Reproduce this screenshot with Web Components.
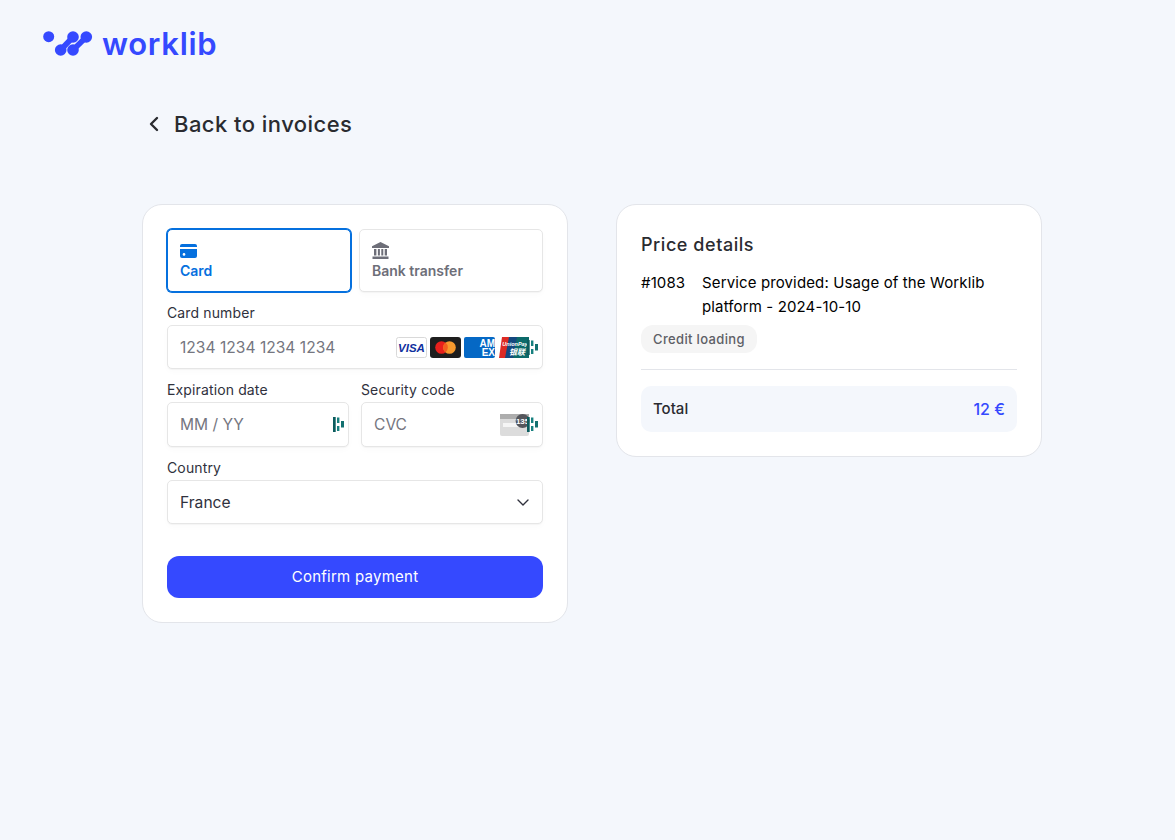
<!DOCTYPE html>
<html lang="en"><head><meta charset="utf-8"><title>Payment</title>
<style>
html,body{margin:0;padding:0}
body{background:#f4f7fc;font-family:Inter,"Noto Sans",sans-serif;color:#2a2b30;min-height:840px}
</style></head><body>
<wl-page>
  <wl-logo slot="logo">worklib</wl-logo>
  <wl-back slot="back">Back to invoices</wl-back>
  <wl-payment slot="left"></wl-payment>
  <wl-price slot="right"></wl-price>
</wl-page>
<script>
function def(name, html){
  customElements.define(name, class extends HTMLElement{
    constructor(){super();const r=this.attachShadow({mode:'open'});r.innerHTML=html;}
  });
}
def('wl-page',`<style>
:host{display:block}
.head{padding:29px 0 0 43px;height:55px}
.back{padding:25px 0 0 142px}
.cols{display:flex;gap:48px;align-items:flex-start;padding:65px 0 0 142px}
</style>
<div class="head"><slot name="logo"></slot></div>
<div class="back"><slot name="back"></slot></div>
<div class="cols"><slot name="left"></slot><slot name="right"></slot></div>`);

def('wl-logo',`<style>
:host{display:flex;align-items:center;gap:9px;height:30px;color:#3549ff}
svg{display:block}
.t{font:600 31px/30px "Inter",sans-serif;letter-spacing:.7px}
</style>
<svg width="50" height="30" viewBox="0 0 50 30" fill="#3549ff" stroke="#3549ff">
<circle cx="5.7" cy="7.7" r="5.5" stroke="none"/>
<circle cx="17.7" cy="21" r="5.8" stroke="none"/><circle cx="30" cy="8" r="5.8" stroke="none"/>
<path d="M17.7 21 30 8" stroke-width="5.6"/>
<circle cx="30" cy="21" r="5.8" stroke="none"/><circle cx="43.3" cy="8" r="5.8" stroke="none"/>
<path d="M30 21 43.3 8" stroke-width="5.6"/>
</svg><span class="t"><slot></slot></span>`);

def('wl-back',`<style>
:host{display:flex;align-items:center;gap:15px;height:30px;font:500 22px/30px Inter,sans-serif;letter-spacing:.45px;color:#2a2b30}
svg{display:block;margin-left:6px}
</style>
<svg width="11" height="16" viewBox="0 0 11 16" fill="none" stroke="#2a2b30" stroke-width="2.4" stroke-linecap="round" stroke-linejoin="round"><path d="M9 2 3 8l6 6"/></svg><span><slot></slot></span>`);

def('wl-card',`<style>
:host{display:block;box-sizing:border-box;width:426px;background:#fff;border:1px solid #e3e5ea;border-radius:20px;padding:24px}
</style><slot></slot>`);

def('wl-tab',`<style>
:host{display:flex;flex-direction:column;box-sizing:border-box;height:63px;padding:12px 12px 0;background:#fff;border:1px solid #e6e6e6;border-radius:5px;box-shadow:0 1px 1px rgba(0,0,0,.03),0 3px 6px rgba(0,0,0,.02);font:600 14px/18px Inter,sans-serif;color:#6d6e78}
:host([active]){border-color:#0570de;color:#0570de;box-shadow:0 0 0 1px #0570de,0 1px 1px rgba(0,0,0,.03),0 3px 6px rgba(18,42,66,.02)}
.i{height:17px;margin-bottom:3px;display:flex;align-items:center}
</style><div class="i"><slot name="icon"></slot></div><div><slot></slot></div>`);

def('wl-field',`<style>
:host{display:block;font:400 14px/17px Inter,sans-serif;letter-spacing:.13px;color:#30313d}
label{display:block;margin-bottom:4px}
.box{position:relative;box-sizing:border-box;height:44px;padding:0 12px;display:flex;align-items:center;justify-content:space-between;background:#fff;border:1px solid #e6e6e6;border-radius:5px;box-shadow:0 1px 1px rgba(0,0,0,.03),0 3px 6px rgba(0,0,0,.02);font-size:15.6px;letter-spacing:0;color:#757680}
:host([value]) .box{color:#30313d}
:host([tall]) .box{height:45px}
</style><label><slot name="label"></slot></label><div class="box"><span><slot></slot></span><slot name="end"></slot></div>`);

def('wl-hb',`<style>
:host{position:absolute;right:4px;top:50%;margin-top:-7.5px;width:11px;height:16px;display:block}
svg{display:block}
</style><svg width="11" height="16" viewBox="0 0 11 16"><path fill="#0b5c5e" d="M0 0h2.7v15H0z"/><path fill="#17807f" d="M4 .5h2.4v5.5H4zM4 9h2.4v5H4z"/><path fill="#12706f" d="M8 4h3v6.5H8z"/></svg>`);

def('wl-brands',`<style>
:host{display:flex;gap:3px;align-items:center;margin-right:1px}
svg{display:block}
</style>
<svg width="31" height="21" viewBox="0 0 31 21"><rect x=".5" y=".5" width="30" height="20" rx="2" fill="#fff" stroke="#d9d9d9"/><text x="15.5" y="15" text-anchor="middle" font-family="Liberation Sans,sans-serif" font-size="11.5" font-weight="700" font-style="italic" fill="#10309e">VISA</text></svg>
<svg width="31" height="21" viewBox="0 0 31 21"><rect width="31" height="21" rx="3" fill="#1e1e1e"/><circle cx="11.5" cy="10.5" r="6.3" fill="#e8201c"/><circle cx="19.5" cy="10.5" r="6.3" fill="#f79a2e"/><path d="M15.5 5.6a6.3 6.3 0 0 1 0 9.8a6.3 6.3 0 0 1 0-9.8z" fill="#f2601f"/></svg>
<svg width="31" height="21" viewBox="0 0 31 21"><rect width="31" height="21" rx="2" fill="#0568c5"/><text x="31" y="10" text-anchor="end" font-family="Liberation Sans,sans-serif" font-size="10" font-weight="700" fill="#fff">AM</text><text x="31" y="19" text-anchor="end" font-family="Liberation Sans,sans-serif" font-size="10" font-weight="700" fill="#fff">EX</text></svg>
<svg width="30" height="21" viewBox="0 0 30 21" style="margin-left:1px"><path d="M3 0h9L8 21H0z" fill="#dd2a24"/><path d="M10 0h10l-4 21H6z" fill="#14487f"/><path d="M18 0h12v21H14z" fill="#0c6a6a"/><text x="16" y="9" text-anchor="middle" font-family="Liberation Sans,sans-serif" font-size="5.5" font-weight="700" font-style="italic" fill="#fff">UnionPay</text><text x="18" y="18" text-anchor="middle" font-family="Noto Sans CJK SC,sans-serif" font-size="8" font-weight="700" font-style="italic" fill="#fff">银联</text></svg>`);

def('wl-cvc',`<style>
:host{display:block}svg{display:block}
</style><svg width="30" height="22" viewBox="0 0 30 22"><rect width="29" height="22" rx="2" fill="#dcdcdc"/><rect width="29" height="5" fill="#adadad"/><rect x="3" y="9" width="22" height="4" fill="#f5f5f5"/><circle cx="22.6" cy="7" r="7" fill="#55565c"/><text x="22.6" y="10" text-anchor="middle" font-family="Liberation Sans,sans-serif" font-size="8" font-weight="700" fill="#fff">135</text></svg>`);

def('wl-payment',`<style>
:host{display:block}
.tabs{display:grid;grid-template-columns:184px 184px;gap:8px;margin-bottom:12px}
.row{display:grid;grid-template-columns:182px 182px;gap:12px;margin-top:12px}
.c{margin-top:12px}
.btn{display:block;box-sizing:border-box;width:100%;height:42px;margin-top:32px;border:0;border-radius:12px;background:#3549ff;color:#fff;font:400 15px/42px Inter,sans-serif;letter-spacing:.25px;text-align:center}
svg{display:block}
</style>
<wl-card>
 <div class="tabs">
  <wl-tab active><svg slot="icon" width="17" height="14" viewBox="0 0 17 14"><path fill="#0570de" d="M2 0h13a2 2 0 0 1 2 2v1H0V2a2 2 0 0 1 2-2zM0 5h17v7a2 2 0 0 1-2 2H2a2 2 0 0 1-2-2z"/><circle cx="4" cy="10.4" r="1.3" fill="#fff"/></svg>Card</wl-tab>
  <wl-tab><svg slot="icon" width="17" height="17" viewBox="0 0 17 17"><path fill="#6d6e78" d="M8.5 0 17 4.2V6H0V4.2zM2 7h2.4v6.5H2zM5.9 7h2v6.5h-2zM9.3 7h2v6.5h-2zM12.7 7H15v6.5h-2.3zM.5 14.6h16V17H.5z"/></svg>Bank transfer</wl-tab>
 </div>
 <wl-field><span slot="label">Card number</span>1234 1234 1234 1234<wl-brands slot="end"></wl-brands><wl-hb slot="end"></wl-hb></wl-field>
 <div class="row">
  <wl-field tall><span slot="label">Expiration date</span>MM / YY<wl-hb slot="end"></wl-hb></wl-field>
  <wl-field tall><span slot="label">Security code</span>CVC<wl-cvc slot="end"></wl-cvc><wl-hb slot="end"></wl-hb></wl-field>
 </div>
 <div class="c"><wl-field value><span slot="label">Country</span>France<svg slot="end" width="12" height="7" viewBox="0 0 12 7" fill="none" stroke="#30313d" stroke-width="1.4" stroke-linecap="round" stroke-linejoin="round" style="margin-right:1px"><path d="M1 1l5 5 5-5"/></svg></wl-field></div>
 <div class="btn">Confirm payment</div>
</wl-card>`);

def('wl-price',`<style>
:host{display:block;color:#000}
h2{margin:0 0 10px;font:500 18px/32px Inter,sans-serif;color:#2a2b30;letter-spacing:.55px}
.line{display:grid;grid-template-columns:61px 1fr;font:400 15px/24px Inter,sans-serif;letter-spacing:.13px;color:#000}
.pill{display:inline-block;margin-top:7px;padding:0 12px;height:28px;border-radius:12px;background:#f5f5f5;color:#5e5f66;font:500 13px/28px Inter,sans-serif;letter-spacing:.35px}
hr{border:0;border-top:1px solid #e3e5ea;margin:16px 0}
.total{display:flex;justify-content:space-between;align-items:center;height:46px;padding:0 12px;border-radius:10px;background:#f4f7fc;font:500 15px/46px Inter,sans-serif;color:#2a2b30}
.total b{font-weight:500;font-size:16px;color:#3549ff}
.p{display:flex;margin-top:-1px}
</style>
<wl-card>
 <h2>Price details</h2>
 <div class="line"><span>#1083</span><span>Service provided: Usage of the Worklib platform - 2024-10-10</span></div>
 <div class="p"><span class="pill">Credit loading</span></div>
 <hr>
 <div class="total"><span>Total</span><b>12 €</b></div>
</wl-card>`);
</script>
</body></html>
